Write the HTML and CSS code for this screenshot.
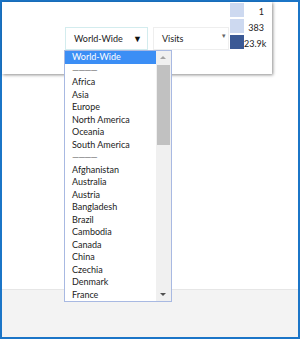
FILE: index.html
```html
<!DOCTYPE html>
<html lang="en">
<head>
    <meta charset="UTF-8">
    <title>Map filters</title>
    <link rel="stylesheet" href="styles.css">
</head>
<body>
    <div class="frame">
        <div class="main">
            <div class="card">
                <div class="filters">
                    <div class="select select-region">
                        <span>World-Wide</span>
                        <span class="arrow">&#9660;</span>

                        <!-- open dropdown list -->
                        <div class="dropdown">
                            <ul class="options">
                                <li class="selected">World-Wide</li>
                                <li class="sep">&#8212;&#8212;&#8212;&#8212;</li>
                                <li>Africa</li>
                                <li>Asia</li>
                                <li>Europe</li>
                                <li>North America</li>
                                <li>Oceania</li>
                                <li>South America</li>
                                <li class="sep">&#8212;&#8212;&#8212;&#8212;</li>
                                <li>Afghanistan</li>
                                <li>Australia</li>
                                <li>Austria</li>
                                <li>Bangladesh</li>
                                <li>Brazil</li>
                                <li>Cambodia</li>
                                <li>Canada</li>
                                <li>China</li>
                                <li>Czechia</li>
                                <li>Denmark</li>
                                <li>France</li>
                            </ul>
                            <div class="scrollbar">
                                <div class="scroll-btn up"></div>
                                <div class="track"><div class="thumb"></div></div>
                                <div class="scroll-btn down"></div>
                            </div>
                        </div>
                    </div>
                    <div class="select select-metric">
                        <span>Visits</span>
                        <span class="arrow small">&#9662;</span>
                    </div>
                </div>
                <div class="legend">
                    <div class="legend-row"><span class="swatch light"></span><span class="value">1</span></div>
                    <div class="legend-row"><span class="swatch light"></span><span class="value">383</span></div>
                    <div class="legend-row"><span class="swatch dark"></span><span class="value">23.9k</span></div>
                </div>
            </div>
        </div>
        <div class="footer"></div>
    </div>
</body>
</html>
```

FILE: styles.css
```css
* {
    margin: 0;
    padding: 0;
    box-sizing: border-box;
}

body {
    font-family: Lato, 'Open Sans', sans-serif;
    font-size: 9px;
    color: #222;
    background: #ffffff;
}

.frame {
    width: 300px;
    height: 339px;
    border: 2px solid #1b75c7;
    display: flex;
    flex-direction: column;
    background: #ffffff;
}

.main {
    height: 287px;
    background: #ffffff;
}

.card {
    width: 270px;
    height: 72px;
    background: #ffffff;
    box-shadow: 1px 1px 3px rgba(0, 0, 0, 0.45);
    display: flex;
    align-items: flex-start;
    padding: 1px 0 0 63px;
}

.filters {
    display: flex;
    gap: 5px;
    margin-top: 24px;
}

.select {
    position: relative;
    height: 23px;
    display: flex;
    align-items: center;
    justify-content: space-between;
    padding: 0 5px 0 8px;
    background: #ffffff;
}

.select-region {
    width: 83px;
    border: 1px solid #d3ecee;
}

.select-metric {
    width: 76px;
    border: 1px solid #eeeeee;
    padding-right: 2px;
}

.arrow {
    font-size: 9px;
    color: #111;
}

.arrow.small {
    font-size: 7px;
    color: #666;
    margin-top: -6px;
}

/* dropdown list */
.dropdown {
    position: absolute;
    top: 22px;
    left: -2px;
    width: 108px;
    height: 252px;
    border: 1px solid #a8b9e2;
    background: #ffffff;
    display: flex;
    z-index: 2;
}

.options {
    list-style: none;
    flex: 1;
}

.options li {
    height: 12.5px;
    line-height: 12.5px;
    padding-left: 7px;
    white-space: nowrap;
}

.options li.selected {
    background: #3b8ef5;
    color: #ffffff;
}

.options li.sep {
    color: #777;
    letter-spacing: -1px;
}

.scrollbar {
    width: 15px;
    display: flex;
    flex-direction: column;
    background: #f0f0f0;
}

.scroll-btn {
    height: 13px;
    position: relative;
}

.scroll-btn::after {
    content: "";
    position: absolute;
    left: 4px;
    top: 5px;
    border-left: 3.5px solid transparent;
    border-right: 3.5px solid transparent;
}

.scroll-btn.up::after {
    border-bottom: 3.5px solid #a3a3a3;
}

.scroll-btn.down::after {
    border-top: 3.5px solid #505050;
}

.track {
    flex: 1;
    padding: 1px 1px 0 1px;
}

.thumb {
    height: 80px;
    background: #c1c1c1;
}

/* legend */
.legend {
    margin-left: 1px;
    display: flex;
    flex-direction: column;
    gap: 2px;
}

.legend-row {
    display: flex;
    align-items: flex-end;
}

.swatch {
    width: 14px;
    height: 14px;
}

.swatch.light {
    background: #cdd9f0;
}

.swatch.dark {
    background: #3b5995;
}

.value {
    width: 20px;
    text-align: right;
    line-height: 11px;
}

.footer {
    flex: 1;
    background: #f3f3f3;
    border-top: 1px solid #e6e6e6;
}
```
